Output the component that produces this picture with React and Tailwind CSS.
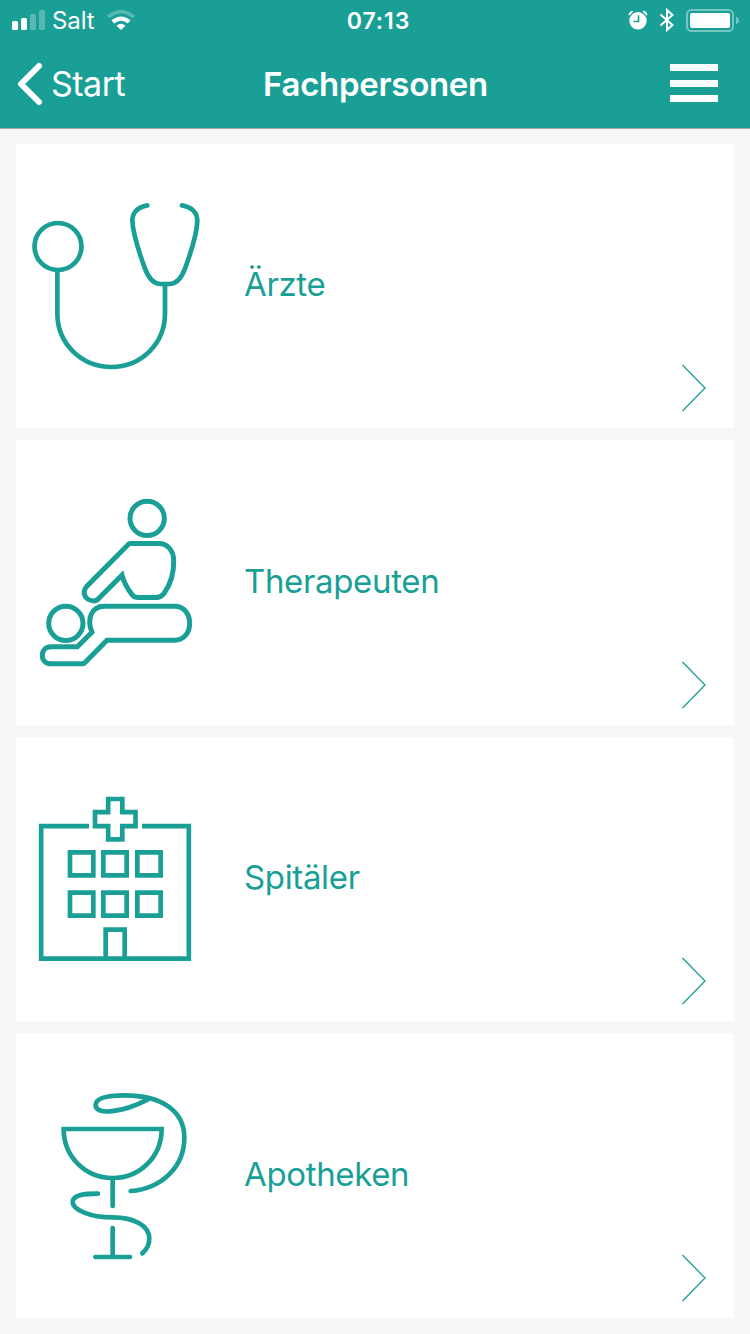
import { clsx } from 'clsx'

const StethoscopeIcon = () => (
    <svg className="w-[200px] h-[190px] overflow-visible" viewBox="0 3 600 570" fill="none" stroke="currentColor" strokeWidth="14" strokeLinecap="round">
        <circle cx="126" cy="169.500" r="70.500" />
        <path d="M124 241V370C124 462 197 531 286 531S447 462 447 370V284" />
        <path d="M394 46C365 51 349 68 349 92C351 137 372 195 387 236C399 268 414 282 434 282H460C480 282 495 268 507 236C522 195 543 137 544 92C544 68 527 51 498 46" />
    </svg>
)

const TherapistIcon = () => (
    <svg className="w-[200px] h-[190px] overflow-visible" viewBox="0 8.5 600 570" fill="none" stroke="currentColor" strokeWidth="15">
        <circle cx="393.500" cy="99.500" r="51.500" />
        <circle cx="149.500" cy="414.500" r="51.500" />
        <path d="M342 175H429C455 175 473 198 473 226C474 266 462 300 444 325C437 334 431 337 421 337H366C358 337 353 335 347 327C332 308 323 288 318 270L248 340C239 350 223 349 213 340C202 330 202 315 211 305L334 181Q338 175 342 175Z" />
        <path d="M265 363H476C503 363 521 385 521 414C521 444 503 465 476 465H273L211 528Q205 536 197 536H105C89 536 79 525 79 511C79 496 89 485 105 485H184L228 441C212 403 225 363 265 363Z" />
    </svg>
)

const HospitalIcon = () => (
    <svg className="w-[200px] h-[190px] overflow-visible" viewBox="0 -3 600 570" fill="none" stroke="currentColor" strokeWidth="14">
        <path d="M219 123.500H75.500V521H518.500V123.500H378" />
        <path d="M276.500 42H319V81.500H358.500V123.500H319V163H276.500V123.500H237V81.500H276.500Z" />
        <path d="M162 202H232V271H162ZM262 202H332V271H262ZM364 202H434V271H364Z" />
        <path d="M162 323H232V392H162ZM262 323H332V392H262ZM364 323H434V392H364Z" />
        <path d="M269 521V434H326V521" />
    </svg>
)

const PharmacyIcon = () => (
    <svg className="w-[200px] h-[190px] overflow-visible" viewBox="0 3 600 570" fill="none" stroke="currentColor" strokeWidth="14" strokeLinecap="round">
        <path d="M143 147H437C437 230 372 294 290 294S143 230 143 147Z" />
        <path d="M290 296V378M290 444V528M238 531H342" />
        <path d="M344 333C435 326 505 262 505 173C505 90 433 46 326 46C278 46 239 53 239 75C239 107 319 98 396 58" />
        <path d="M246 341C207 341 170 344 170 366C170 389 222 412 290 412C356 412 400 438 400 476C400 493 392 508 379 520" />
    </svg>
)

const categories = [
    { id: 'aerzte', label: 'Ärzte', Icon: StethoscopeIcon, height: 'h-[284px]' },
    { id: 'therapeuten', label: 'Therapeuten', Icon: TherapistIcon, height: 'h-[285px]' },
    { id: 'spitaeler', label: 'Spitäler', Icon: HospitalIcon, height: 'h-[284px]' },
    { id: 'apotheken', label: 'Apotheken', Icon: PharmacyIcon, height: 'h-[285px]' },
]

const StatusBar = () => (
    <div className="grid grid-cols-3 items-center h-10 pl-3 pr-[11px]">
        <div className="flex items-center">
            <svg className="w-[33px] h-5" viewBox="0 0 33 20" fill="currentColor">
                <rect x="0" y="11" width="6" height="9" rx="1.500" />
                <rect x="9" y="8" width="6" height="12" rx="1.500" />
                <rect x="18" y="4" width="6" height="16" rx="1.500" opacity="0.27" />
                <rect x="27" y="0" width="6" height="20" rx="1.500" opacity="0.27" />
            </svg>
            <span className="ml-[7px] w-[43px] pt-0.5 text-[24px] leading-[38px] tracking-[-0.1px]">Salt</span>
            <svg className="ml-3 w-[28px] h-5" viewBox="0 0 28 20" fill="currentColor">
                <path d="M0 5.500Q14 -5.500 28 5.500L25.500 8.300Q14 -1.200 2.500 8.300Z" opacity="0.27" />
                <path d="M4.500 10.300Q14 2.500 23.500 10.300L20.800 13.400Q14 8.200 7.200 13.400Z" />
                <path d="M9.500 15.700Q14 12 18.500 15.700L14 20Z" />
            </svg>
        </div>
        <span className="pt-0.5 pl-1.5 text-center text-[23px] leading-[38px] font-semibold tracking-[0.9px]">07:13</span>
        <div className="flex items-center justify-end">
            <svg className="w-5 h-5" viewBox="0 0 20 20" fill="currentColor">
                <path d="M0.500 5A5 5 0 0 1 4.500 0.700L5.300 1.500L1.500 5.500ZM19.500 5A5 5 0 0 0 15.500 0.700L14.700 1.500L18.500 5.500Z" />
                <circle cx="10" cy="10.800" r="8.700" />
                <path d="M10.500 5.300V11.500H5.500" fill="none" stroke="#199f96" strokeWidth="1.600" />
            </svg>
            <svg className="ml-[11px] w-4 h-6" viewBox="0 0 16 24" fill="none" stroke="currentColor" strokeWidth="2">
                <path d="M1.500 6.500L13.500 17L8 22V2L13.500 7L1.500 17.500" />
            </svg>
            <svg className="ml-[11px] w-[53px] h-[23px]" viewBox="0 0 53 23">
                <rect x="1" y="1" width="46" height="21" rx="4.500" fill="none" stroke="white" strokeWidth="2" opacity="0.4" />
                <rect x="4" y="4" width="40" height="15" rx="2" fill="white" />
                <path d="M50 7.500Q53 9 53 11.500T50 15.500Z" fill="white" opacity="0.4" />
            </svg>
        </div>
    </div>
)

const NavBar = () => (
    <div className="grid grid-cols-[200px_1fr_200px] items-center h-[88px]">
        <button className="flex items-center pl-[17px]">
            <svg className="w-[26px] h-[44px]" viewBox="0 0 26 44" fill="none" stroke="currentColor" strokeWidth="6" strokeLinecap="round" strokeLinejoin="round">
                <path d="M22 4L4 22L22 40" />
            </svg>
            <span className="ml-2 text-[34px] leading-[44px] tracking-[-0.5px]">Start</span>
        </button>
        <h1 className="pl-px text-center text-[33px] leading-[44px] font-semibold tracking-[-0.3px]">Fachpersonen</h1>
        <button className="flex flex-col justify-between justify-self-end mb-0.5 mr-8 w-12 h-[38px]">
            <span className="h-[7px] w-full bg-white" />
            <span className="h-[7px] w-full bg-white" />
            <span className="h-[7px] w-full bg-white" />
        </button>
    </div>
)

const CategoryCard = ({ label, Icon, height }) => (
    <button className={clsx('flex w-full items-center bg-white text-left', height)}>
        <Icon />
        <span className="ml-7 flex-1 pb-1 text-[33px] leading-[44px] tracking-[-0.35px]">{label}</span>
        <svg className="self-end mb-4 mr-7 w-6 h-12" viewBox="0 0 24 48" fill="none" stroke="currentColor" strokeWidth="1.300">
            <path d="M0.500 1L23 24L0.500 47" />
        </svg>
    </button>
)

const App = () => {
    return (
        <div className="w-[750px] h-[1334px] overflow-hidden bg-[#f7f7f7] font-['Inter','Liberation_Sans',sans-serif] text-[#199f96]">
            <header className="h-[129px] bg-[#199f96] border-b border-[#a5aaa9] text-white">
                <StatusBar />
                <NavBar />
            </header>
            <main className="flex flex-col gap-3 px-4 pt-[15px]">
                {categories.map((category) => (
                    <CategoryCard key={category.id} {...category} />
                ))}
            </main>
        </div>
    )
}

export default App
